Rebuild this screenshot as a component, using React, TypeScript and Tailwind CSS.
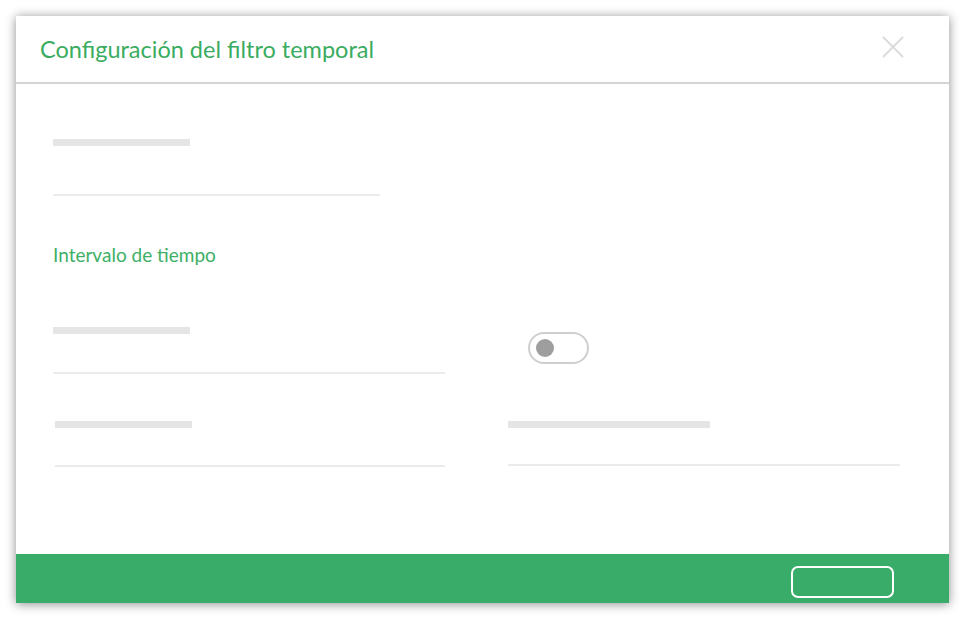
import React from 'react';

function Bar({ className }: { className?: string }) {
  return <div className={'h-[7px] bg-[#e5e5e5] ' + (className ?? '')} />;
}

function Line({ className }: { className?: string }) {
  return <div className={'h-[2px] bg-[#ebebeb] ' + (className ?? '')} />;
}

export default function App() {
  return (
    <div className="h-[622px] w-[968px] bg-white pl-[16px] pt-[16px] font-['Lato',sans-serif]">
      <div className="flex h-[587px] w-[933px] flex-col bg-white shadow-[0_1px_10px_rgba(0,0,0,0.45)]">
        <div className="flex h-[68px] shrink-0 items-center justify-between border-b-2 border-[#d4d4d4] pl-[24px] pr-[45px]">
          <h1 className="text-[23.5px] leading-[28px] text-[#3aac5f]">Configuración del filtro temporal</h1>
          <svg width="22" height="22" viewBox="0 0 22 22" className="mb-[4px]">
            <path d="M1 1L21 21M21 1L1 21" stroke="#dcdcdc" strokeWidth="2" fill="none" />
          </svg>
        </div>

        <div className="flex flex-1 flex-col pl-[37px] pr-[49px]">
          <Bar className="mt-[55px] w-[137px]" />
          <Line className="mt-[48px] w-[327px]" />
          <p className="mt-[47px] text-[19px] leading-[24px] text-[#3daf66]">Intervalo de tiempo</p>

          <div className="mt-[60px] grid grid-cols-2 gap-x-[63px]">
            <div className="flex flex-col">
              <Bar className="w-[137px]" />
              <Line className="mt-[38px]" />
            </div>
            <div className="flex items-start pl-[20px]">
              <div className="mt-[5px] flex h-[32px] w-[61px] items-center rounded-full border-2 border-[#cfcfcf] pl-[6px]">
                <div className="h-[18px] w-[18px] rounded-full bg-[#9e9e9e]" />
              </div>
            </div>
          </div>

          <div className="mt-[47px] grid grid-cols-2 gap-x-[63px]">
            <div className="flex flex-col pl-[2px]">
              <Bar className="w-[137px]" />
              <Line className="mt-[37px]" />
            </div>
            <div className="flex flex-col">
              <Bar className="w-[202px]" />
              <Line className="mt-[36px]" />
            </div>
          </div>
        </div>

        <div className="flex h-[49px] shrink-0 items-center justify-end bg-[#3aac69] pr-[55px]">
          <button className="mt-[6px] h-[32px] w-[103px] rounded-[7px] border-2 border-white" />
        </div>
      </div>
    </div>
  );
}
